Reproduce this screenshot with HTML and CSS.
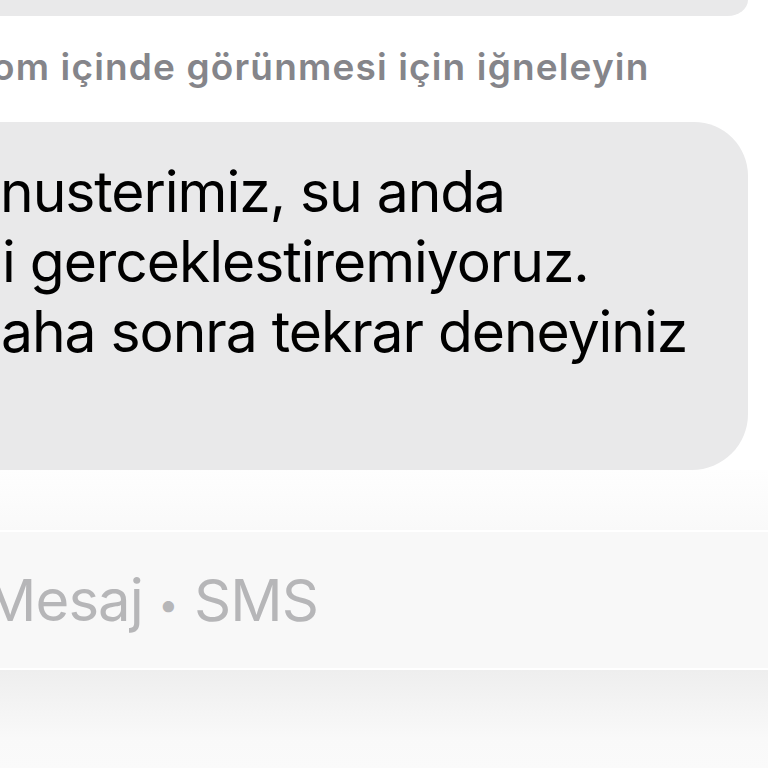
FILE: index.html
```html
<!DOCTYPE html>
<html lang="tr">
<head>
<meta charset="utf-8">
<title>Mesajlar</title>
<link rel="stylesheet" href="styles.css">
</head>
<body>
<main class="screen">
  <div class="bubble bubble-prev"></div>
  <p class="caption">om içinde görünmesi için iğneleyin</p>
  <div class="bubble bubble-main">
    <div class="msg-line line-1">nusterimiz, su anda</div>
    <div class="msg-line line-2">i gerceklestiremiyoruz.</div>
    <div class="msg-line line-3">aha sonra tekrar deneyiniz</div>
  </div>
  <div class="composer-top"></div>
  <div class="composer">
    <div class="field"><span class="placeholder">Mesaj <span class="sep">•</span> SMS</span></div>
  </div>
  <div class="keyboard-edge"></div>
</main>
</body>
</html>
```

FILE: styles.css
```css
html, body {
  margin: 0;
  padding: 0;
  background: #ffffff;
  width: 768px;
  height: 768px;
  overflow: hidden;
}

.screen {
  display: flex;
  flex-direction: column;
  width: 768px;
  height: 768px;
  font-family: "Inter", "Noto Sans", "Liberation Sans", sans-serif;
  overflow: hidden;
}

.bubble {
  background: #e9e9ea;
  margin-left: -200px;
  margin-right: 20px;
}

.bubble-prev {
  height: 16px;
  flex: none;
  border-bottom-right-radius: 56px 44px;
}

.caption {
  margin: 0;
  padding: 31px 0 35px;
  margin-left: -8px;
  font-size: 37px;
  line-height: 40px;
  font-weight: 600;
  letter-spacing: 1.15px;
  color: #85858a;
  white-space: nowrap;
  flex: none;
}

.bubble-main {
  flex: none;
  height: 348px;
  box-sizing: border-box;
  padding: 35px 0 0 200px;
  border-radius: 0 54px 56px 0;
}

.msg-line {
  font-size: 57px;
  line-height: 70px;
  color: #000000;
  white-space: nowrap;
  letter-spacing: -1.05px;
}

.line-2 { margin-left: 2px; }
.line-3 { margin-left: 1px; }

.composer-top {
  flex: none;
  height: 60px;
  background: linear-gradient(#fefefe, #f9f9f9);
}

.composer {
  flex: none;
  border-top: 2px solid #ffffff;
  border-bottom: 2px solid #ffffff;
  background: #f8f8f8;
}

.field {
  height: 136px;
  display: flex;
  align-items: center;
  margin-left: -16px;
}

.placeholder {
  font-size: 58px;
  color: #b6b6b8;
  white-space: nowrap;
  letter-spacing: -0.9px;
}

.sep {
  font-size: 36px;
  letter-spacing: 0;
  vertical-align: 4px;
}

.keyboard-edge {
  flex: 1;
  background: linear-gradient(#eeeeee, #f9f9f9 70%, #fafafa);
}
```
